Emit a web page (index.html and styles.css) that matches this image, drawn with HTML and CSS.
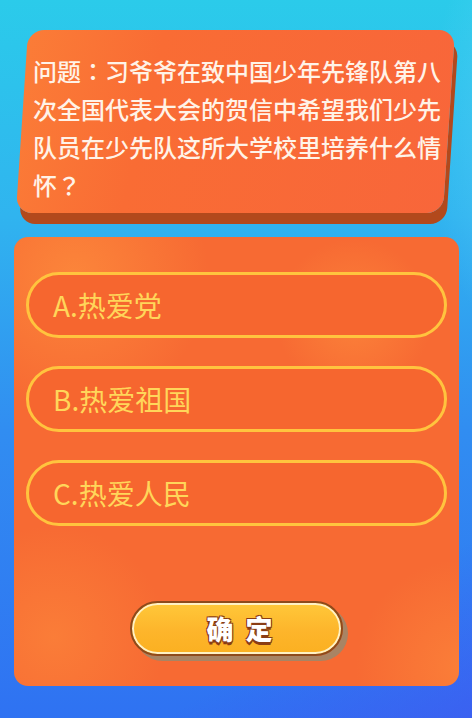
FILE: index.html
```html
<!DOCTYPE html>
<html lang="zh-CN">
<head>
    <meta charset="UTF-8">
    <meta name="viewport" content="width=device-width, initial-scale=1.0">
    <title>答题</title>
    <link rel="stylesheet" href="styles.css">
</head>
<body>
    <div class="quiz-page">
        <div class="question-card">
            <p class="question-text">问题<span class="punct" lang="zh-TW">：</span>习爷爷在致中国少年先锋队第八次全国代表大会的贺信中希望我们少先队员在少先队这所大学校里培养什么情怀<span class="punct" lang="zh-TW">？</span></p>
        </div>

        <div class="answer-panel">
            <div class="option">A.热爱党</div>
            <div class="option">B.热爱祖国</div>
            <div class="option">C.热爱人民</div>

            <button class="confirm-btn" type="button">确定</button>
        </div>
    </div>
</body>
</html>
```

FILE: styles.css
```css
html, body {
    margin: 0;
    height: 100%;
}
body {
    font-family: "Noto Sans CJK SC", "Noto Sans", sans-serif;
    background-color: #2f8af0;
    background-image:
        radial-gradient(ellipse 150px 300px at 540px 130px, rgba(110, 215, 255, 0.5), rgba(110, 215, 255, 0) 75%),
        linear-gradient(150deg, rgba(70, 80, 240, 0) 82%, rgba(70, 80, 240, 0.5) 100%),
        linear-gradient(180deg, #2bcbea 0%, #30b4ef 30%, #318df1 60%, #2f72f2 100%);
    overflow: hidden;
}
.quiz-page {
    padding-top: 30px;
}

/* question box, slanted with a dark edge */
.question-card {
    position: relative;
    margin: 0 23px 0 22px;
    height: 183px;
}
.question-card::before {
    content: "";
    position: absolute;
    inset: 0;
    border-radius: 16px;
    background: linear-gradient(100deg, #fb7c37 0%, #f96c34 30%, #f8663a 100%);
    box-shadow: 4px 11px 0 #b2491c;
    transform: skewX(-3.8deg);
}
.question-text {
    position: relative;
    margin: 0;
    padding: 22px 6px 0 11px;
    font-size: 24px;
    font-weight: 500;
    line-height: 38px;
    color: #fff3e8;
}
.question-text .punct {
    font-family: "Noto Sans CJK TC", sans-serif;
}

/* options panel */
.answer-panel {
    margin: 24px 13px 0 14px;
    height: 449px;
    box-sizing: border-box;
    padding: 35px 12px 0 12px;
    border-radius: 14px;
    background-color: #f76a33;
    background-image:
        radial-gradient(circle 130px at 340px 80px, rgba(253, 140, 60, 0.7), rgba(253, 140, 60, 0) 60%),
        radial-gradient(circle 150px at 60px 40px, rgba(253, 140, 60, 0.8), rgba(253, 140, 60, 0) 90%),
        radial-gradient(circle 140px at 40px 400px, rgba(253, 140, 60, 0.55), rgba(253, 140, 60, 0) 80%),
        radial-gradient(circle 120px at 450px 430px, rgba(253, 140, 60, 0.6), rgba(253, 140, 60, 0) 90%);
    display: flex;
    flex-direction: column;
    align-items: center;
}
.option {
    align-self: stretch;
    height: 66px;
    box-sizing: border-box;
    margin-bottom: 28px;
    padding-left: 24px;
    border: 3px solid #ffc43e;
    border-radius: 33px;
    background: #f6662f;
    color: #ffd65a;
    font-size: 28px;
    line-height: 60px;
}
.confirm-btn {
    margin-top: 47px;
    width: 213px;
    height: 55px;
    border: 2px solid #8e4a1c;
    border-radius: 28px;
    background: linear-gradient(180deg, #ffc83a 0%, #fdb52b 55%, #fbb021 100%);
    box-shadow: inset 0 0 0 2px #fff1c4, 5px 5px 0 #a88464;
    font-family: "Noto Sans CJK SC", sans-serif;
    font-size: 27px;
    font-weight: 900;
    letter-spacing: 12px;
    padding: 0 0 0 18px;
    color: #ffffff;
    text-shadow: -1px -1px 0 #8a3d14, 1px -1px 0 #8a3d14, -1px 1px 0 #8a3d14, 1px 1px 0 #8a3d14, 0 3px 0 #8a3d14;
    cursor: pointer;
}
```
